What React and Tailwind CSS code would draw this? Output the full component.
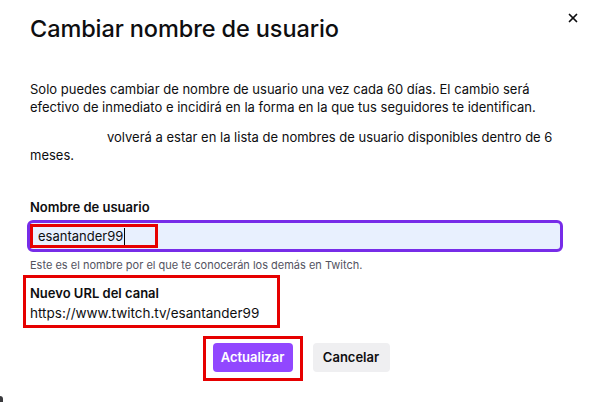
import { X } from "lucide-react";

export default function App() {
  return (
    <div
      className="relative w-[590px] h-[402px] bg-white overflow-hidden text-[#0e0e10]"
      style={{ fontFamily: "Inter, 'Noto Sans', sans-serif" }}
    >
      <button className="absolute right-[10px] top-[11px] w-[14px] h-[14px] flex items-center justify-center">
        <X className="w-[14px] h-[14px]" strokeWidth={3} />
      </button>

      <div className="px-[30px] pt-[14px]">
        <h1 className="text-[23.5px] leading-[30px] font-medium tracking-[-0.1px]">
          Cambiar nombre de usuario
        </h1>

        <p className="mt-[36px] text-[13px] leading-[18px]">
          Solo puedes cambiar de nombre de usuario una vez cada 60 días. El cambio será
          efectivo de inmediato e incidirá en la forma en la que tus seguidores te identifican.
        </p>
        <p className="mt-[12px] text-[13px] leading-[18px]">
          <span className="inline-block w-[77px]"></span>
          volverá a estar en la lista de nombres de usuario disponibles dentro de 6 meses.
        </p>

        <div className="mt-[34px] text-[13px] leading-[18px] font-semibold">Nombre de usuario</div>
      </div>

      <div className="mx-[27px] mt-[4px] h-[32px] rounded-[6px] border-[3px] border-[#772ce8] bg-[#e8f0fe] flex items-center">
        {/* red highlight from the annotated screenshot */}
        <div className="w-[128px] h-[24px] border-[3px] border-[#e60000] pl-[5px] flex items-center text-[13px] leading-[18px]">
          esantander99
          <span className="w-px h-[17px] bg-black ml-px"></span>
        </div>
      </div>

      <div className="pl-[30px] mt-[6px] text-[11px] leading-[14px] text-[#53535f]">
        Este es el nombre por el que te conocerán los demás en Twitch.
      </div>

      <div className="ml-[23px] mt-[3px] w-[257px] h-[53px] border-[3px] border-[#e60000] pl-[4px] pt-[5px] leading-[20px]">
        <div className="text-[13px] font-semibold">Nuevo URL del canal</div>
        <div className="text-[13.5px]">https://www.twitch.tv/esantander99</div>
      </div>

      <div className="flex justify-center items-start gap-[10px] mt-[8px] pl-[2px]">
        <div className="border-[3px] border-[#e60000] pl-[7px] pr-[7px] pt-[4px] pb-[6px]">
          <button className="h-[29px] w-[80px] rounded-[4px] bg-[#9147ff] text-white text-[13px] font-semibold">
            Actualizar
          </button>
        </div>
        <button className="mt-[7px] h-[29px] w-[77px] rounded-[4px] bg-[#efeff1] text-[#0e0e10] text-[13px] font-semibold">
          Cancelar
        </button>
      </div>

      <div className="absolute left-0 top-[396px] w-[3px] h-[6px] bg-[#3a3a3d] rounded-tr-[3px]"></div>
    </div>
  );
}
